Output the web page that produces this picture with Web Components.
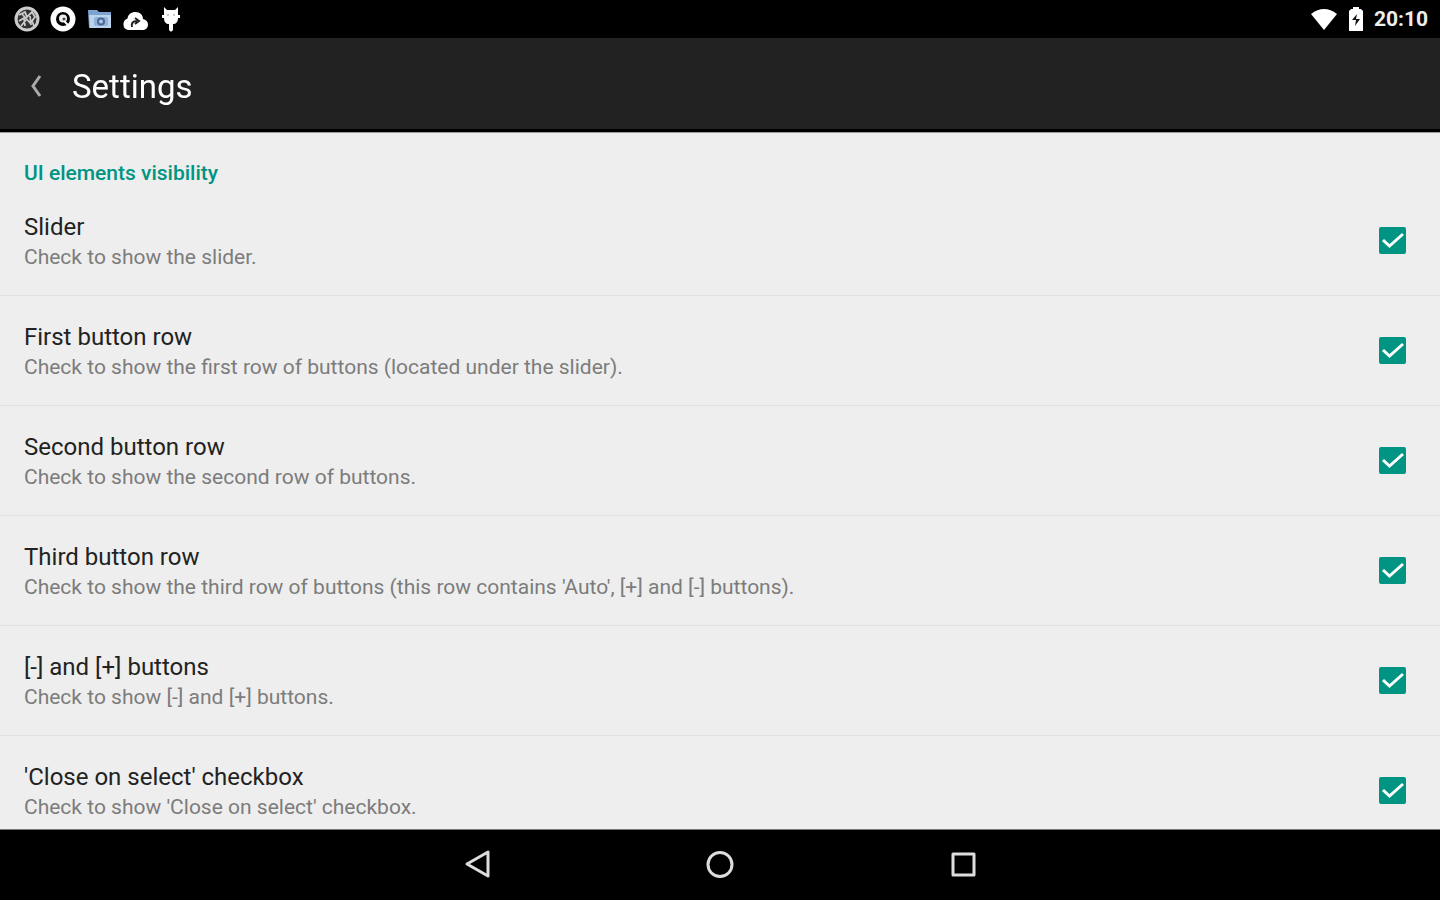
<!DOCTYPE html>
<html lang="en">
<head>
<meta charset="utf-8">
<meta name="viewport" content="width=device-width, initial-scale=1">
<title>Settings</title>
<style>
    body {
        margin: 0;
        background: #000;
        font-family: Roboto, "Noto Sans", sans-serif;
    }
</style>
</head>
<body>
<settings-screen>
    <status-bar slot="status" time="20:10"></status-bar>
    <app-bar slot="bar">Settings</app-bar>
    <preference-category heading="UI elements visibility">
        <checkbox-preference heading="Slider" checked>Check to show the slider.</checkbox-preference>
        <checkbox-preference heading="First button row" checked>Check to show the first row of buttons (located under the slider).</checkbox-preference>
        <checkbox-preference heading="Second button row" checked>Check to show the second row of buttons.</checkbox-preference>
        <checkbox-preference heading="Third button row" checked>Check to show the third row of buttons (this row contains 'Auto', [+] and [-] buttons).</checkbox-preference>
        <checkbox-preference heading="[-] and [+] buttons" checked>Check to show [-] and [+] buttons.</checkbox-preference>
        <checkbox-preference heading="'Close on select' checkbox" checked>Check to show 'Close on select' checkbox.</checkbox-preference>
    </preference-category>
    <navigation-bar slot="nav"></navigation-bar>
</settings-screen>

<script>
/**
 * Full height screen: system bars around a scrolling list.
 */
class SettingsScreen extends HTMLElement {
    constructor() {
        super();
        this.attachShadow({ mode: 'open' });
        this.shadowRoot.innerHTML = `
            <style>
                :host {
                    display: flex;
                    flex-direction: column;
                    height: 100vh;
                }

                main {
                    flex: 1;
                    min-height: 0;
                    overflow-y: auto;
                    scrollbar-width: none;
                    background: #eee;
                    border-bottom: 1px solid #777;
                }
            </style>
            <slot name="status"></slot>
            <slot name="bar"></slot>
            <main><slot></slot></main>
            <slot name="nav"></slot>
        `;
    }
}

/**
 * Notification icons on the left, system icons and clock on the right.
 */
class StatusBar extends HTMLElement {
    constructor() {
        super();
        this.attachShadow({ mode: 'open' });
        this.shadowRoot.innerHTML = `
            <style>
                :host {
                    display: flex;
                    align-items: center;
                    justify-content: space-between;
                    height: 38px;
                    padding: 0 12px 0 14px;
                    background: #000;
                    color: #eee;
                }

                .group {
                    display: flex;
                    align-items: center;
                    gap: 10px;
                }

                svg {
                    display: block;
                }

                time {
                    font-size: 21px;
                    line-height: 40px;
                    font-weight: 700;
                }
            </style>
            <div class="group">
                <svg width="26" height="26" viewBox="0 0 26 26" fill="none" stroke="#ccc">
                    <circle cx="13" cy="13" r="11" stroke-width="3" fill="#333"/>
                    <path d="M5 9l6-3 2 5 5-5 3 5-3 4 2 5M5 15l5-3 1 8M8 8l9 10M12 14l-5 6M16 10l1 9" stroke-width="1.8"/>
                </svg>
                <svg width="26" height="26" viewBox="0 0 26 26">
                    <circle cx="13" cy="13" r="12.5" fill="#fff"/>
                    <circle cx="13" cy="13" r="7" fill="#000"/>
                    <circle cx="13" cy="12.5" r="4" fill="#eee"/>
                    <circle cx="14" cy="13" r="1.5" fill="#444"/>
                    <path d="M14 15l4 4" stroke="#fff" stroke-width="2"/>
                </svg>
                <svg width="26" height="26" viewBox="0 0 26 26">
                    <path d="M2 4h9l2 2h12v16H3z" fill="#7fa3d0"/>
                    <path d="M3 9h22v13H4z" fill="#bcd3ee"/>
                    <rect x="8" y="11" width="14" height="9" rx="2" fill="#90b2dc"/>
                    <circle cx="15" cy="15.5" r="4" fill="#4a6791"/>
                    <circle cx="15" cy="15.5" r="2" fill="#a9c8ec"/>
                </svg>
                <svg width="26" height="26" viewBox="0 0 26 26">
                    <path d="M6 24a6 6 0 0 1-.5-11.5C6 8.500 9 6 13.500 6s7.500 3 7.500 7c3 .5 5 2.800 5 5.500 0 3-2 5.500-5 5.500z" fill="#fff"/>
                    <path d="M10 21c-1-4 1-6 5-6M13 12l4 3-4 3" fill="none" stroke="#222" stroke-width="2"/>
                </svg>
                <svg width="26" height="26" viewBox="0 0 26 26">
                    <path d="M6 1l3 3h8l3-3v8h2v3h-2c0 4-2 6-5 6v6q-2 3-4 0v-6c-3 0-5-2-5-6H4V9h2z" fill="#fff"/>
                    <path d="M9 9h2M15 9h2" stroke="#999"/>
                </svg>
            </div>
            <div class="group">
                <svg width="28" height="26" viewBox="0 0 28 26">
                    <path d="M1 8Q14-2 27 8L14 24z" fill="#fff"/>
                </svg>
                <svg width="16" height="26" viewBox="0 0 16 26">
                    <path d="M5 1h6v2h2l2 2v20H1V5l2-2h2z" fill="#fff"/>
                    <path d="M9 8l-5 6h4l-1 6 5-7H8z" fill="#111"/>
                </svg>
                <time></time>
            </div>
        `;
    }

    connectedCallback() {
        this.shadowRoot.querySelector('time').textContent = this.getAttribute('time');
    }
}

/**
 * Dark title bar with a back button. The title is slotted.
 */
class AppBar extends HTMLElement {
    constructor() {
        super();
        this.attachShadow({ mode: 'open' });
        this.shadowRoot.innerHTML = `
            <style>
                :host {
                    display: flex;
                    align-items: center;
                    height: 94px;
                    padding-top: 6px;
                    box-sizing: border-box;
                    background: #222;
                    border-bottom: 3px solid #000;
                    box-shadow: 0 1px #999;
                    position: relative;
                    color: #fff;
                }

                button {
                    display: grid;
                    place-items: center;
                    width: 72px;
                    height: 72px;
                    padding: 0;
                    border: 0;
                    background: none;
                }

                h1 {
                    margin: 0;
                    font-size: 33px;
                    line-height: 48px;
                    font-weight: 400;
                }
            </style>
            <button type="button" aria-label="Back">
                <svg width="12" height="26" viewBox="0 0 12 26" fill="none" stroke="#aaa" stroke-width="3">
                    <path d="M10 2L3 12l7 10"/>
                </svg>
            </button>
            <h1><slot></slot></h1>
        `;
    }
}

/**
 * Titled group of preferences.
 */
class PreferenceCategory extends HTMLElement {
    constructor() {
        super();
        this.attachShadow({ mode: 'open' });
        this.shadowRoot.innerHTML = `
            <style>
                :host {
                    display: block;
                }

                h2 {
                    margin: 0;
                    padding: 28px 24px 0;
                    color: #009482;
                    font-size: 21px;
                    line-height: 26px;
                    font-weight: 500;
                }
            </style>
            <h2></h2>
            <slot></slot>
        `;
    }

    connectedCallback() {
        this.shadowRoot.querySelector('h2').textContent = this.getAttribute('heading');
    }
}

/**
 * Row with a heading, a slotted summary and a tick box.
 */
class CheckboxPreference extends HTMLElement {
    constructor() {
        super();
        this.attachShadow({ mode: 'open' });
        this.shadowRoot.innerHTML = `
            <style>
                :host {
                    display: block;
                    border-bottom: 1px solid #e1e1e1;
                }

                label {
                    display: flex;
                    align-items: center;
                    justify-content: space-between;
                    gap: 24px;
                    min-height: 109px;
                    padding: 0 34px 0 24px;
                }

                .text {
                    padding-top: 3px;
                }

                .heading,
                .summary {
                    display: block;
                    line-height: 30px;
                }

                .heading {
                    color: #222;
                    font-size: 24px;
                }

                .summary {
                    color: #7c7c7c;
                    font-size: 21px;
                }

                .box {
                    display: grid;
                    flex: none;
                }

                .box > * {
                    grid-area: 1 / 1;
                }

                input {
                    appearance: none;
                    width: 27px;
                    height: 27px;
                    margin: 0;
                    border: 3px solid #757575;
                    border-radius: 2px;
                }

                input:checked {
                    border-color: #009482;
                    background: #009482;
                }

                svg {
                    visibility: hidden;
                    pointer-events: none;
                }

                input:checked + svg {
                    visibility: visible;
                }
            </style>
            <label>
                <span class="text">
                    <span class="heading"></span>
                    <span class="summary"><slot></slot></span>
                </span>
                <span class="box">
                    <input type="checkbox">
                    <svg width="27" height="27" viewBox="0 0 27 27" fill="none" stroke="#fff" stroke-width="3">
                        <path d="M4 13l6.500 6L24 7"/>
                    </svg>
                </span>
            </label>
        `;
    }

    connectedCallback() {
        this.shadowRoot.querySelector('.heading').textContent = this.getAttribute('heading');
        this.shadowRoot.querySelector('input').checked = this.hasAttribute('checked');
    }
}

/**
 * Back, home and recents buttons.
 */
class NavigationBar extends HTMLElement {
    constructor() {
        super();
        this.attachShadow({ mode: 'open' });
        this.shadowRoot.innerHTML = `
            <style>
                :host {
                    display: block;
                    background: #000;
                }

                nav {
                    display: flex;
                    justify-content: center;
                    gap: 163px;
                }

                button {
                    display: grid;
                    place-items: center;
                    width: 80px;
                    height: 70px;
                    padding: 0;
                    border: 0;
                    background: none;
                }

                svg {
                    fill: none;
                    stroke: #ddd;
                    stroke-width: 3;
                    stroke-linejoin: round;
                }
            </style>
            <nav>
                <button type="button" aria-label="Back">
                    <svg width="32" height="32" viewBox="0 0 32 32"><path d="M27 3v24L6 15z"/></svg>
                </button>
                <button type="button" aria-label="Home">
                    <svg width="32" height="32" viewBox="0 0 32 32"><circle cx="16" cy="15.5" r="12"/></svg>
                </button>
                <button type="button" aria-label="Recent apps">
                    <svg width="32" height="32" viewBox="0 0 32 32"><rect x="6" y="5" width="21" height="21"/></svg>
                </button>
            </nav>
        `;
    }
}

// Define the custom elements
customElements.define('settings-screen', SettingsScreen);
customElements.define('status-bar', StatusBar);
customElements.define('app-bar', AppBar);
customElements.define('preference-category', PreferenceCategory);
customElements.define('checkbox-preference', CheckboxPreference);
customElements.define('navigation-bar', NavigationBar);
</script>
</body>
</html>
